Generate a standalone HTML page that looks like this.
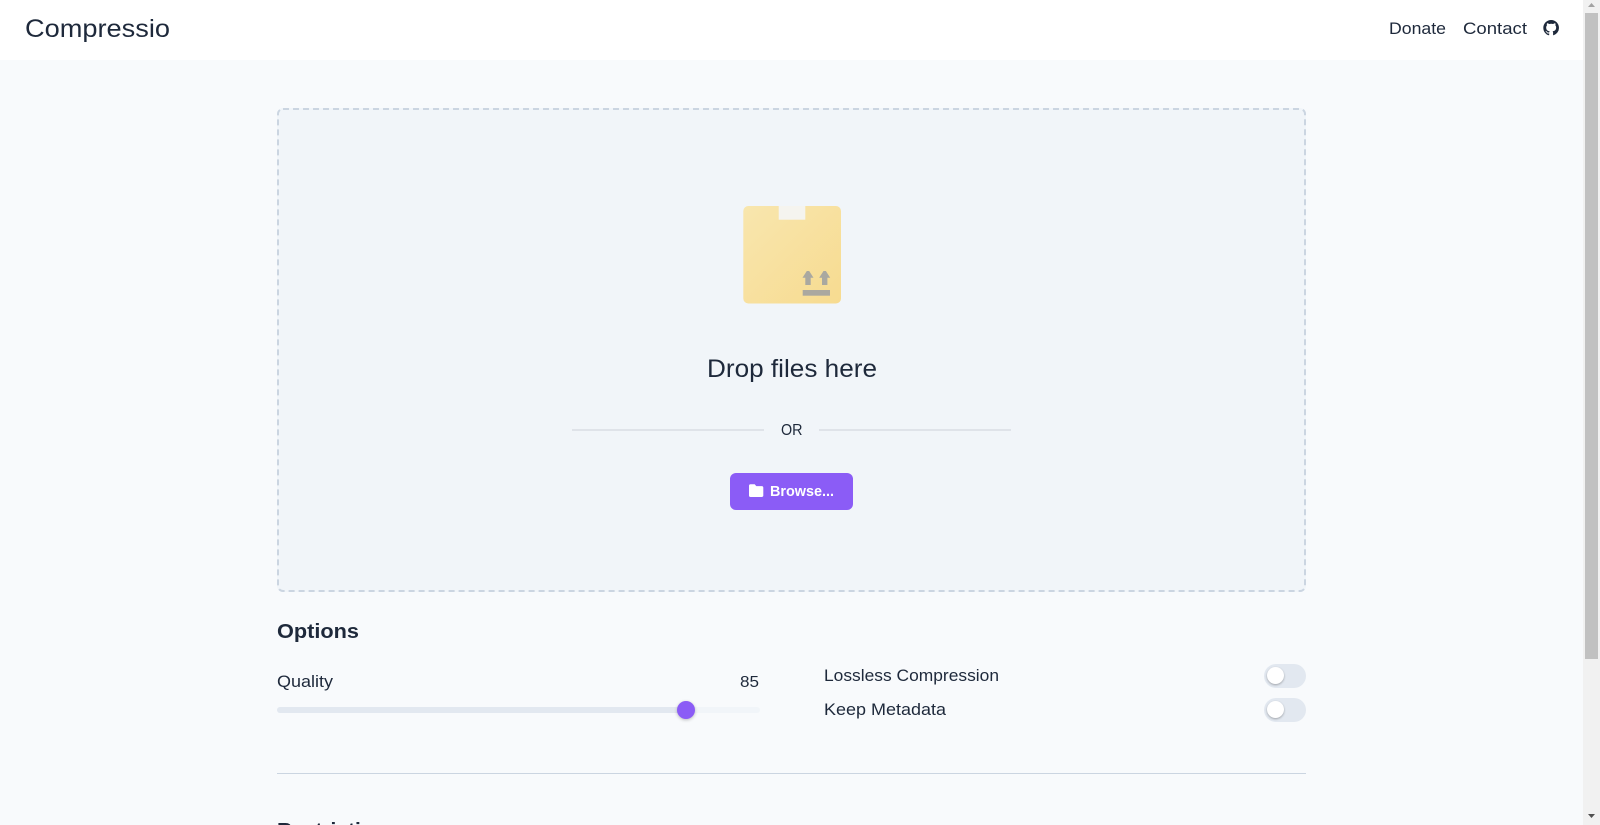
<!DOCTYPE html>
<html lang="en">
<head>
<meta charset="utf-8">
<title>Compressio</title>
<style>
html,body{margin:0;padding:0;width:1600px;height:825px;overflow:hidden;background:#f8fafc}
body{position:relative;font-family:"Liberation Sans",sans-serif;color:#1e293b}
.a{position:absolute;box-sizing:border-box}
header{left:0;top:0;width:1583px;height:60px;background:#fff}
.drop{left:277px;top:108px;width:1029px;height:484px;background:#f1f5f9;border-radius:6px}
.btn{left:730px;top:473px;width:123px;height:37px;background:#8b5cf6;border-radius:6px}
.line{height:2px;background:#dfe3e9;top:429px}
.track{left:277px;top:707px;width:483px;height:6px;background:#f1f5f9;border-radius:3px}
.fill{left:277px;top:707px;width:409px;height:6px;background:#e2e8f0;border-radius:3px 0 0 3px}
.thumb{left:677px;top:701px;width:18px;height:18px;border-radius:50%;background:#8b5cf6;box-shadow:0 1px 3px rgba(0,0,0,.25)}
.tog{left:1264px;width:42px;height:24px;border-radius:12px;background:#e2e8f0}
.knob{left:1267px;width:17px;height:17px;border-radius:50%;background:#fff;box-shadow:0 1px 2px rgba(0,0,0,.3)}
.hr{left:277px;top:773px;width:1029px;height:1px;background:#cbd5e1}
.sb{left:1583px;top:0;width:17px;height:825px;background:#f1f1f1}
.th{left:1585px;top:13px;width:13px;height:646px;background:#c1c1c1}
svg{position:absolute;left:0;top:0}
text{font-family:"Liberation Sans",sans-serif;fill:#1e293b}
</style>
</head>
<body>
<header class="a"></header>
<div class="a drop"></div>
<div class="a line" style="left:572px;width:192px"></div>
<div class="a line" style="left:819px;width:192px"></div>
<div class="a btn"></div>
<div class="a track"></div>
<div class="a fill"></div>
<div class="a thumb"></div>
<div class="a tog" style="top:664px"></div>
<div class="a knob" style="top:667px"></div>
<div class="a tog" style="top:698px"></div>
<div class="a knob" style="top:701px"></div>
<div class="a hr"></div>
<div class="a sb"></div>
<div class="a th"></div>
<svg width="1600" height="825" viewBox="0 0 1600 825">
<defs>
<linearGradient id="g" x1="0" y1="0" x2="1" y2="1"><stop offset="0" stop-color="#f8e6ae"/><stop offset="1" stop-color="#f7db90"/></linearGradient>
</defs>
<rect x="278" y="109" width="1027" height="482" rx="5" fill="none" stroke="#cbd5e1" stroke-width="2" stroke-dasharray="6 4"/>
<text x="25" y="37" font-size="25" textLength="145" lengthAdjust="spacingAndGlyphs">Compressio</text>
<text x="1389" y="34" font-size="16.5" textLength="57" lengthAdjust="spacingAndGlyphs">Donate</text>
<text x="1463" y="34" font-size="16.5" textLength="64" lengthAdjust="spacingAndGlyphs">Contact</text>
<g transform="translate(1543.3,20) scale(.98)"><path fill="#1e293b" d="M8 0C3.58 0 0 3.58 0 8c0 3.54 2.29 6.53 5.47 7.59.4.07.55-.17.55-.38 0-.19-.01-.82-.01-1.49-2.01.37-2.53-.49-2.69-.94-.09-.23-.48-.94-.82-1.13-.28-.15-.68-.52-.01-.53.63-.01 1.08.58 1.23.82.72 1.21 1.87.87 2.33.66.07-.52.28-.87.51-1.07-1.78-.2-3.64-.89-3.64-3.95 0-.87.31-1.59.82-2.15-.08-.2-.36-1.02.08-2.12 0 0 .67-.21 2.2.82.64-.18 1.32-.27 2-.27.68 0 1.36.09 2 .27 1.53-1.04 2.2-.82 2.2-.82.44 1.1.16 1.92.08 2.12.51.56.82 1.27.82 2.15 0 3.07-1.87 3.75-3.65 3.95.29.25.54.73.54 1.48 0 1.07-.01 1.93-.01 2.2 0 .21.15.46.55.38A8.013 8.013 0 0016 8c0-4.42-3.58-8-8-8z"/></g>
<rect x="743.3" y="206" width="97.7" height="97.5" rx="5" fill="url(#g)"/>
<rect x="778.7" y="206" width="26.6" height="13.7" fill="#f5f4ef"/>
<path fill="#aaa8a0" d="M806.800 271h2.400l4.300 6.800h-2.800V285h-5.400v-7.200h-2.800zM823.500 271h2.400l4.300 6.800h-2.800V285h-5.400v-7.200h-2.800z"/>
<rect x="802.700" y="290" width="27.300" height="5.700" fill="#aaa8a0"/>
<text x="707" y="377" font-size="25" textLength="170" lengthAdjust="spacingAndGlyphs">Drop files here</text>
<text x="781" y="435" font-size="15.500" textLength="21.500" lengthAdjust="spacingAndGlyphs">OR</text>
<path fill="#fff" d="M749 485.800c0-.9.600-1.500 1.500-1.500h4.200l1.600 1.800h5.400c.9 0 1.600.6 1.600 1.500v8c0 .8-.7 1.400-1.600 1.400h-11.200c-.9 0-1.500-.6-1.500-1.400z"/>
<text x="770" y="496" font-size="14.500" font-weight="700" textLength="64" lengthAdjust="spacingAndGlyphs" style="fill:#fff">Browse...</text>
<text x="277" y="638" font-size="20.500" font-weight="700" textLength="82" lengthAdjust="spacingAndGlyphs">Options</text>
<text x="277" y="687" font-size="16.500" textLength="56" lengthAdjust="spacingAndGlyphs">Quality</text>
<text x="740" y="687" font-size="16" textLength="19" lengthAdjust="spacingAndGlyphs">85</text>
<text x="824" y="681" font-size="16.500" textLength="175" lengthAdjust="spacingAndGlyphs">Lossless Compression</text>
<text x="824" y="715" font-size="16.500" textLength="122" lengthAdjust="spacingAndGlyphs">Keep Metadata</text>
<text x="277" y="837" font-size="20.500" font-weight="700" textLength="121" lengthAdjust="spacingAndGlyphs">Restrictions</text>
<path fill="#a3a3a3" d="M1591.500 3l3.500 4h-7z"/>
<path fill="#505050" d="M1588 814h7l-3.500 4z"/>
</svg>
</body>
</html>
